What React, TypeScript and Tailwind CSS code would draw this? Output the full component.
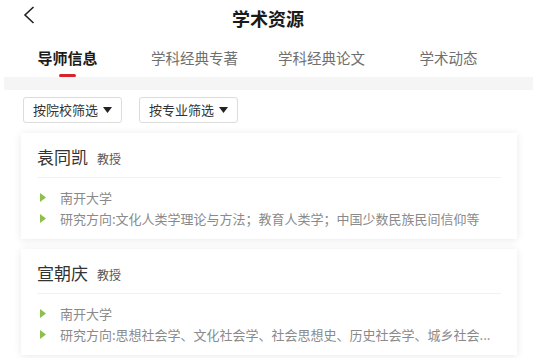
import React from "react";

const font = { fontFamily: '"Noto Sans CJK SC", "Noto Sans", sans-serif' };

function Bullet({ text }: { text: string }) {
  return (
    <div className="flex items-center h-[21px]">
      <svg width="6" height="9" viewBox="0 0 6 9" className="ml-[3px] mr-[14px] shrink-0">
        <polygon points="0,0 6,4.5 0,9" fill="#8cc04b" />
      </svg>
      <span className="text-[13px] leading-[21px] text-[#8a8a8a] whitespace-nowrap">{text}</span>
    </div>
  );
}

function Card({ name, school, dir }: { name: string; school: string; dir: string }) {
  return (
    <div className="bg-white mx-[21px] w-[496px] shadow-[0_1px_8px_rgba(0,0,0,0.09)] px-4 pt-[14px] pb-[10px]">
      <div className="flex items-baseline h-[20px] leading-[20px]">
        <span className="text-[17px] text-[#333]">{name}</span>
        <span className="text-[12px] text-[#555] ml-[9px]">教授</span>
      </div>
      <div className="mt-[10px] border-t border-[#f2f2f2]" />
      <div className="mt-[9px] flex flex-col">
        <Bullet text={school} />
        <Bullet text={dir} />
      </div>
    </div>
  );
}

export default function App() {
  const tabs = ["导师信息", "学科经典专著", "学科经典论文", "学术动态"];
  return (
    <div className="w-[544px] h-[358px] bg-white overflow-hidden" style={font}>
      <div className="relative h-[38px] flex items-center justify-center">
        <svg
          width="12"
          height="18"
          viewBox="0 0 12 18"
          className="absolute left-[23px] top-[6px]"
        >
          <polyline points="10.5,1 2,9 10.5,17" fill="none" stroke="#222" strokeWidth="1.6" />
        </svg>
        <span className="text-[18px] font-bold text-[#1a1a1a] ml-[-8px] mt-[-1px]">学术资源</span>
      </div>
      <div className="flex pl-[4px] h-[39px]">
        {tabs.map((t, i) => (
          <div key={t} className="w-[127px] flex flex-col items-center pt-[9px]">
            <span
              className={
                i === 0
                  ? "text-[15px] leading-[22px] font-bold text-[#1a1a1a]"
                  : "text-[14.5px] leading-[22px] text-[#6f6f6f]"
              }
            >
              {t}
            </span>
            {i === 0 && <div className="mt-[5px] w-[17px] h-[3px] bg-[#d6232f] rounded-sm" />}
          </div>
        ))}
      </div>
      <div className="ml-[4px] w-[529px] h-[13px] bg-[#f5f5f5]" />
      <div className="flex gap-[17px] pl-[23px] pt-[7px] pb-[10px]">
        {["按院校筛选", "按专业筛选"].map((t) => (
          <div
            key={t}
            className="h-[26px] flex items-center pl-[9px] pr-[9px] border border-[#dcdcdc] rounded-[3px] bg-white"
          >
            <span className="text-[13px] text-[#333]">{t}</span>
            <svg width="9" height="6" viewBox="0 0 9 6" className="ml-[5px]">
              <polygon points="0,0 9,0 4.5,6" fill="#222" />
            </svg>
          </div>
        ))}
      </div>
      <div className="flex flex-col gap-[10px]">
        <Card
          name="袁同凯"
          school="南开大学"
          dir="研究方向:文化人类学理论与方法；教育人类学；中国少数民族民间信仰等"
        />
        <Card
          name="宣朝庆"
          school="南开大学"
          dir="研究方向:思想社会学、文化社会学、社会思想史、历史社会学、城乡社会..."
        />
      </div>
    </div>
  );
}
